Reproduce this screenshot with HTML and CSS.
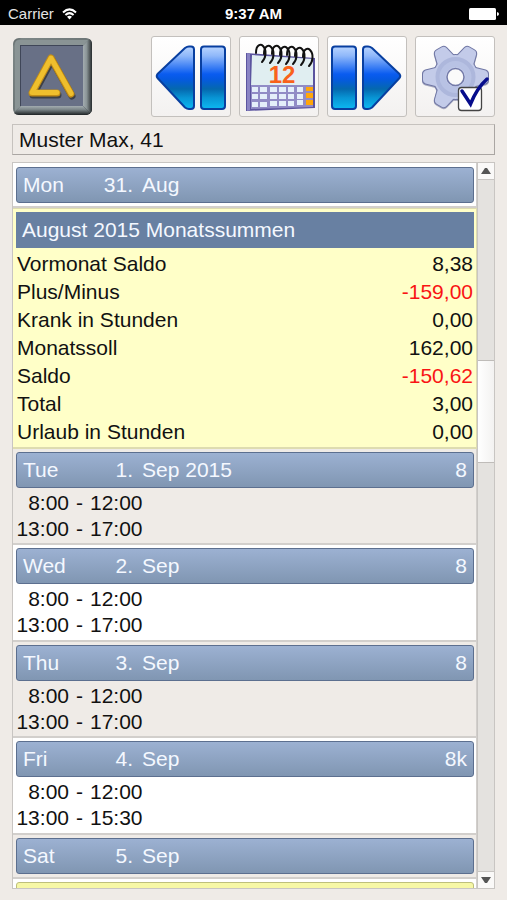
FILE: index.html
```html
<!DOCTYPE html>
<html lang="de">
<head>
<meta charset="utf-8">
<meta name="viewport" content="width=device-width, initial-scale=1">
<title>Muster Max</title>
<link rel="stylesheet" href="styles.css">
</head>
<body>
<header class="status">
  <div class="carrier">
    <span>Carrier</span>
    <svg width="15" height="12" viewBox="0 0 15 12" aria-hidden="true">
      <g fill="none" stroke="#fff" stroke-width="2">
        <path d="M1 4.4Q7.5-1.6 14 4.4"/>
        <path d="M3.4 7Q7.5 3.2 11.6 7"/>
      </g>
      <path d="M5 8.8Q7.5 6.8 10 8.8L7.5 11.5Z" fill="#fff"/>
    </svg>
  </div>
  <time class="clock">9:37 AM</time>
  <svg class="battery" width="30" height="12" viewBox="0 0 30 12" aria-hidden="true">
    <rect width="27" height="12" rx="1.5" fill="#fff"/>
    <path d="M28 4Q30 4.500 30 6T28 8Z" fill="#fff"/>
  </svg>
</header>

<main class="app">
  <nav class="toolbar">
    <button class="logo" type="button" aria-label="Start">
      <svg width="79" height="77" viewBox="0 0 79 77">
        <defs>
          <linearGradient id="rim" x1="0" y1="0" x2="1" y2="1">
            <stop offset="0" stop-color="#4f5658"/><stop offset=".06" stop-color="#7d8787"/>
            <stop offset=".5" stop-color="#6d7677"/><stop offset=".75" stop-color="#3b4142"/>
            <stop offset="1" stop-color="#191c1d"/>
          </linearGradient>
          <linearGradient id="side" x1="0" y1="0" x2="1" y2="0">
            <stop offset="0" stop-color="#a3acb0"/><stop offset=".4" stop-color="#8b9597"/><stop offset="1" stop-color="#262b2d"/>
          </linearGradient>
          <linearGradient id="base" x1="0" y1="0" x2="0" y2="1">
            <stop offset="0" stop-color="#a3acb0"/><stop offset=".4" stop-color="#7b8588"/><stop offset="1" stop-color="#1d2123"/>
          </linearGradient>
        </defs>
        <rect width="79" height="77" rx="6" fill="url(#rim)"/>
        <path d="M70 8L76 1Q79 2 79 6V71Q79 74 77 75L70 68Z" fill="url(#side)"/>
        <path d="M8 68H70L77 75Q75 77 73 77H6Q3 77 1 75Z" fill="url(#base)"/>
        <path d="M2 73V6Q2 2 6 2H75L70 8H8V68Z" fill="#8a9495"/>
        <rect x="7" y="7" width="63" height="61" fill="#3f4658"/>
        <rect x="8" y="8" width="62" height="60" fill="#687086"/>
        <path d="M45 57H20L39 22L59 58" fill="none" stroke="#3d4047" stroke-width="7" stroke-linecap="round" stroke-linejoin="round"/>
        <path d="M44 55H19L38 20L58 56" fill="none" stroke="#c28d17" stroke-width="7" stroke-linecap="round" stroke-linejoin="round"/>
        <path d="M44 54.500H19L38 20L58 55.500" fill="none" stroke="#efbf2d" stroke-width="5" stroke-linecap="round" stroke-linejoin="round"/>
      </svg>
    </button>
    <div class="tools">
      <button class="tool" type="button" aria-label="Zurück">
        <svg width="80" height="80" viewBox="0 0 80 80">
          <defs>
            <linearGradient id="blue" x1="0" y1="0" x2="0" y2="1">
              <stop offset="0" stop-color="#b9d5ff"/><stop offset=".15" stop-color="#8fb8fa"/>
              <stop offset=".44" stop-color="#0a5cf0"/><stop offset=".52" stop-color="#0559e2"/>
              <stop offset=".68" stop-color="#0568ae"/><stop offset=".82" stop-color="#0894d4"/>
              <stop offset="1" stop-color="#0cb8f2"/>
            </linearGradient>
          </defs>
          <g fill="url(#blue)" stroke="#083fa0" stroke-width="2" stroke-linejoin="round">
            <path d="M6.500 37L34 11Q36 9.500 38 9.500H40Q43 9.500 43 12.500V69Q43 72 40 72H38Q36 72 34 70.500L6.500 41Q5 39 6.500 37Z"/>
            <rect x="50" y="9.500" width="24" height="62.500" rx="3"/>
          </g>
        </svg>
      </button>
      <button class="tool" type="button" aria-label="Kalender">
        <svg width="80" height="80" viewBox="0 0 80 80">
          <path d="M7 16L76 21V71L7 74Z" fill="#5b549f"/>
          <path d="M8 16L11 17V73L8 74Z" fill="#8a84c4"/>
          <path d="M13 18L74 22V49H12Z" fill="#e0eef1"/>
          <path d="M12 48H74V70L12 72Z" fill="#918cc6"/>
          <g fill="#e4effa">
            <path d="M13 50h6v5h-6zM21 50h7v5h-7zM31 50h7v5h-7zM40 50h7v5h-7zM49 50h6v5h-6zM58 50h6v5h-6z"/>
            <path d="M13 57h6v5h-6zM21 57h7v5h-7zM31 57h7v5h-7zM40 57h7v5h-7zM49 57h6v5h-6zM58 57h6v5h-6z"/>
            <path d="M13 65h6v5h-6zM21 65h7v5h-7zM31 64h7v5h-7zM40 64h7v5h-7zM49 64h6v5h-6zM58 63h6v5h-6z"/>
          </g>
          <path d="M67 50h7v4h-7zM67 56h7v5h-7zM67 63h7v5h-7z" fill="#ffa60a"/>
          <text x="43" y="46" class="date">12</text>
          <defs><path id="ring" d="M17 16C17 7 22 7 24 9C28 13 27 21 23 25"/></defs>
          <g fill="none" stroke="#111" stroke-width="2" stroke-linecap="round">
            <use href="#ring"/><use href="#ring" x="8" y="1"/><use href="#ring" x="16" y="1"/>
            <use href="#ring" x="24" y="2"/><use href="#ring" x="31" y="2"/><use href="#ring" x="39" y="3"/>
            <use href="#ring" x="47" y="4"/>
          </g>
        </svg>
      </button>
      <button class="tool" type="button" aria-label="Weiter">
        <svg width="80" height="80" viewBox="0 0 80 80">
          <g fill="url(#blue)" stroke="#083fa0" stroke-width="2" stroke-linejoin="round">
            <rect x="5" y="9.500" width="24" height="62.500" rx="3"/>
            <path d="M72.500 37L45 11Q43 9.500 41 9.500H39Q36 9.500 36 12.500V69Q36 72 39 72H41Q43 72 45 70.500L72.500 41Q74 39 72.500 37Z"/>
          </g>
        </svg>
      </button>
      <button class="tool" type="button" aria-label="Einstellungen">
        <svg width="80" height="80" viewBox="0 0 80 80">
          <defs>
            <path id="tooth" d="M31 22L34 10Q35 7.500 37.500 7.500H43.500Q46 7.500 47 10L50 22Z"/>
            <g id="gear">
              <circle cx="40.500" cy="40" r="22"/>
              <use href="#tooth" transform="rotate(30 40.500 40)"/><use href="#tooth" transform="rotate(90 40.500 40)"/>
              <use href="#tooth" transform="rotate(150 40.500 40)"/><use href="#tooth" transform="rotate(210 40.500 40)"/>
              <use href="#tooth" transform="rotate(270 40.500 40)"/><use href="#tooth" transform="rotate(330 40.500 40)"/>
            </g>
          </defs>
          <use href="#gear" y="1" fill="#8d91b4" stroke="#a9abc0" stroke-width="2"/>
          <use href="#gear" fill="#bcc5e6" stroke="#7077a4" stroke-width="2"/>
          <use href="#gear" fill="#c3cbe9"/>
          <circle cx="40.500" cy="40" r="16" fill="none" stroke="#adb7dc" stroke-width="8"/>
          <circle cx="40.500" cy="40" r="13" fill="none" stroke="#b8c2e4" stroke-width="6"/>
          <circle cx="40.500" cy="40" r="8.500" fill="#fafafa" stroke="#737aa8" stroke-width="1.500"/>
          <rect x="43.500" y="50.500" width="23" height="23" rx="3" fill="#fff" stroke="#444" stroke-width="1.300"/>
          <path d="M47 54L55.500 67Q62 51 72 42" fill="none" stroke="#060c8c" stroke-width="3.500" stroke-linecap="round"/>
        </svg>
      </button>
    </div>
  </nav>

  <h1 class="person">Muster Max, 41</h1>

  <div class="panel">
    <div class="list">
      <section class="day brief">
        <h2 class="bar"><span>Mon</span><span class="num">31.</span><span>Aug</span></h2>
      </section>
      <section class="month">
        <h2 class="title">August 2015 Monatssummen</h2>
        <table class="sums">
          <tr><th scope="row">Vormonat Saldo</th><td>8,38</td></tr>
          <tr><th scope="row">Plus/Minus</th><td class="neg">-159,00</td></tr>
          <tr><th scope="row">Krank in Stunden</th><td>0,00</td></tr>
          <tr><th scope="row">Monatssoll</th><td>162,00</td></tr>
          <tr><th scope="row">Saldo</th><td class="neg">-150,62</td></tr>
          <tr><th scope="row">Total</th><td>3,00</td></tr>
          <tr><th scope="row">Urlaub in Stunden</th><td>0,00</td></tr>
        </table>
      </section>
      <section class="day shade">
        <h2 class="bar"><span>Tue</span><span class="num">1.</span><span>Sep 2015</span><span class="hours">8</span></h2>
        <p class="time"><span class="from">8:00</span> <span>-</span> <span>12:00</span></p>
        <p class="time"><span class="from">13:00</span> <span>-</span> <span>17:00</span></p>
      </section>
      <section class="day">
        <h2 class="bar"><span>Wed</span><span class="num">2.</span><span>Sep</span><span class="hours">8</span></h2>
        <p class="time"><span class="from">8:00</span> <span>-</span> <span>12:00</span></p>
        <p class="time"><span class="from">13:00</span> <span>-</span> <span>17:00</span></p>
      </section>
      <section class="day shade">
        <h2 class="bar"><span>Thu</span><span class="num">3.</span><span>Sep</span><span class="hours">8</span></h2>
        <p class="time"><span class="from">8:00</span> <span>-</span> <span>12:00</span></p>
        <p class="time"><span class="from">13:00</span> <span>-</span> <span>17:00</span></p>
      </section>
      <section class="day">
        <h2 class="bar"><span>Fri</span><span class="num">4.</span><span>Sep</span><span class="hours">8k</span></h2>
        <p class="time"><span class="from">8:00</span> <span>-</span> <span>12:00</span></p>
        <p class="time"><span class="from">13:00</span> <span>-</span> <span>15:30</span></p>
      </section>
      <section class="day brief shade">
        <h2 class="bar"><span>Sat</span><span class="num">5.</span><span>Sep</span></h2>
      </section>
      <section class="day">
        <div class="bar sunday"></div>
      </section>
    </div>
    <div class="scroll">
      <button class="step" type="button" aria-label="Nach oben"><svg width="10" height="6" viewBox="0 0 10 6"><path d="M0 6L4 0H6L10 6Z" fill="#555"/></svg></button>
      <div class="track"><div class="thumb"></div></div>
      <button class="step down" type="button" aria-label="Nach unten"><svg width="10" height="6" viewBox="0 0 10 6"><path d="M0 0L4 6H6L10 0Z" fill="#555"/></svg></button>
    </div>
  </div>
</main>
</body>
</html>
```
FILE: styles.css
```css
* {
  box-sizing: border-box;
}

body {
  margin: 0;
  height: 100vh;
  display: flex;
  flex-direction: column;
  background: #efebe7;
  color: #111;
  font: 21px/28px "Liberation Sans", Arial, sans-serif;
}

h1, h2, p {
  margin: 0;
  font-size: inherit;
  font-weight: normal;
}

button {
  padding: 0;
  border: 0;
  background: none;
}

svg {
  display: block;
}

/* Status bar */
.status {
  display: grid;
  grid-template-columns: 1fr auto 1fr;
  align-items: center;
  height: 25px;
  padding: 2px 8px 0;
  background: #000;
  color: #fff;
  font-size: 15px;
  line-height: 20px;
}

.carrier {
  display: flex;
  align-items: center;
  gap: 8px;
  color: #e4e4e4;
}

.clock {
  font-weight: bold;
}

.battery {
  justify-self: end;
}

.app {
  flex: 1;
  min-height: 0;
  display: flex;
  flex-direction: column;
  padding: 11px 12px;
}

/* Toolbar */
.toolbar {
  display: flex;
  align-items: center;
  justify-content: space-between;
  padding-left: 1px;
}

.tools {
  display: flex;
  gap: 8px;
}

.tool {
  width: 80px;
  height: 81px;
  border: 1px solid #c3c0bd;
  border-radius: 3px;
  background: linear-gradient(#fff, #f3f1f0);
}

.tool svg {
  margin: 0 -1px;
}

.date {
  fill: #f9621b;
  font: bold 24px "Liberation Sans", Arial, sans-serif;
  text-anchor: middle;
}

.person {
  margin: 7px 0;
  padding: 1px 6px 0;
  border: 1px solid #c6c2be;
  border-bottom-color: #aaa6a3;
  border-right-color: #aaa6a3;
  line-height: 28px;
}

/* Scrolling list */
.panel {
  flex: 1;
  min-height: 0;
  display: flex;
  border: 1px solid #c8c5c2;
}

.list {
  flex: 1;
  overflow: hidden;
  background: #fff;
}

.day {
  padding: 3px 2px 2px 3px;
  border: solid #d2cfcc;
  border-width: 0 1px 2px 0;
}

.shade {
  padding-bottom: 1px;
  background: #efebe7;
}

.brief {
  padding-top: 4px;
  padding-bottom: 3px;
}

.bar {
  display: grid;
  grid-template-columns: 56px 54px 1fr auto;
  align-items: center;
  height: 36px;
  margin-bottom: 2px;
  padding: 0 6px;
  border: 1px solid #5c6f8f;
  border-radius: 3px;
  background: linear-gradient(#9cb1d2, #8096b2);
  color: #f4f8ff;
}

.brief .bar {
  margin-bottom: 0;
}

.num {
  text-align: right;
}

.num + span {
  padding-left: 9px;
}

.brief.shade {
  padding-top: 3px;
}

.bar.sunday {
  border-color: #bdbf7c;
  background: #f6f7a6;
}

.time {
  display: flex;
  gap: 7px;
  line-height: 26px;
}

.from {
  width: 53px;
  text-align: right;
}

.month {
  padding: 3px 2px 1px 3px;
  border: solid #dedcb0;
  border-width: 1px 1px 2px 0;
  background: #ffffc8;
}

.title {
  padding: 4px 6px;
  background: #6880a2;
  color: #f4f8ff;
}

.sums {
  width: 100%;
  margin-top: 2px;
  border-collapse: collapse;
}

.sums th,
.sums td {
  padding: 0 1px;
  line-height: 28px;
  text-align: left;
  font-weight: normal;
}

.sums td {
  text-align: right;
}

.sums .neg {
  color: #f91414;
}

.scroll {
  width: 17px;
  display: flex;
  flex-direction: column;
  border-left: 1px solid #c8c5c2;
  background: #e4e2df;
}

.step {
  display: flex;
  align-items: center;
  justify-content: center;
  height: 17px;
  border-bottom: 1px solid #c8c5c2;
  background: #faf9f8;
}

.down {
  border-top: 1px solid #c8c5c2;
  border-bottom: 0;
}

.track {
  flex: 1;
  display: grid;
  grid-template-rows: 26% 15% 1fr;
}

.thumb {
  grid-row: 2;
  border: solid #bfbcb9;
  border-width: 1px 0;
  background: linear-gradient(90deg, #fff, #f3f2f1);
}
```
